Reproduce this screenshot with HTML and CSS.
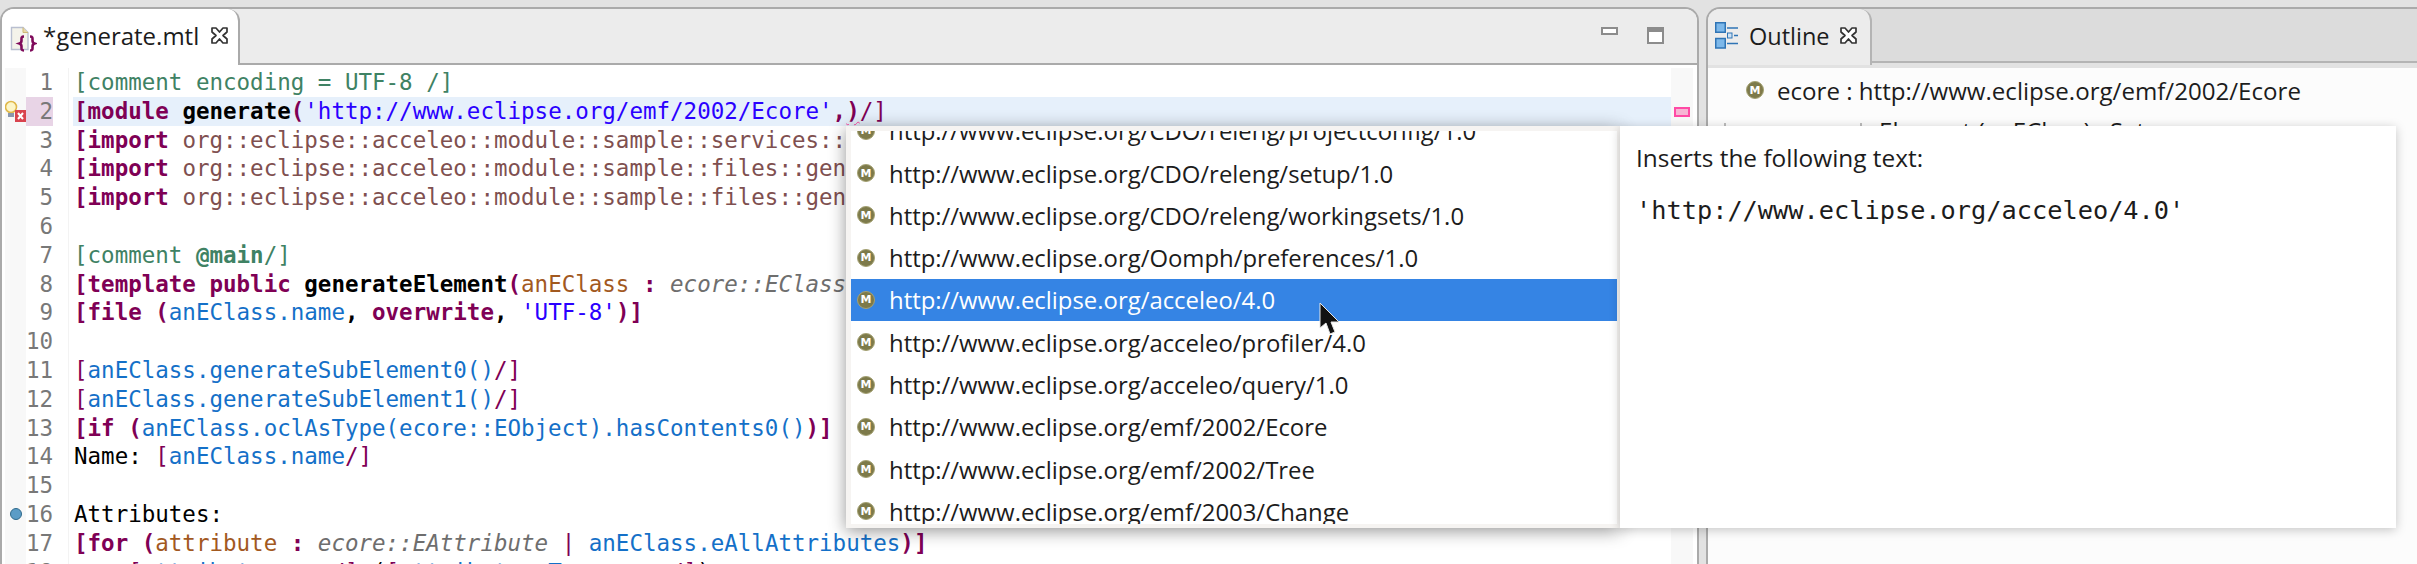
FILE: index.html
```html
<!DOCTYPE html>
<html lang="en">
<head>
<meta charset="utf-8">
<title>generate.mtl</title>
<link rel="stylesheet" href="styles.css">
</head>
<body>
<div class="app">
  <section class="editor">
    <header class="tabbar">
      <div class="tab">
        <svg class="file-icon" width="27" height="27" viewBox="0 0 27 27"><path d="M1.5 1.5H13l5 5v17H1.5z" fill="#f4f3ea" stroke="#b9bfd0" stroke-width="1.4"/><path d="M13 1.5v5h5" fill="#e8d9a8" stroke="#cdb878"/><path d="M14 10.5c-3 0-2.500 1.500-2.500 4 0 2-.5 2.500-2 3 1.500.5 2 1 2 3 0 2.500-.5 4 2.500 4M20 10.500c3 0 2.500 1.500 2.500 4 0 2 .5 2.500 2 3-1.500.5-2 1-2 3 0 2.500.5 4-2.500 4" fill="none" stroke="#7f0a5a" stroke-width="2.600"/></svg>
        <span class="tab-title">*generate.mtl</span>
        <svg class="close" width="19" height="19" viewBox="0 0 19 19"><path d="M2 2h4l3.500 4L13 2h4v4l-4 3.500 4 3.500v4h-4l-3.500-4L6 17H2v-4l4-3.500L2 6z" fill="#fff" stroke="#333" stroke-width="1.700" stroke-linejoin="round"/></svg>
      </div>
      <div class="tab-tools">
        <span class="btn-min"></span>
        <span class="btn-max"></span>
      </div>
    </header>
    <div class="code-area">
      <div class="line"><span class="ann"></span><span class="num">1</span><span class="sep"></span><code class="code c">[comment encoding = UTF-8 /]</code><span class="ruler"></span></div>
      <div class="line"><span class="ann"><svg width="21" height="23" viewBox="0 0 21 23"><circle cx="6" cy="7" r="5.500" fill="#fdf6c8" stroke="#e0b84a" stroke-width="1.600"/><rect x="3" y="13" width="6" height="4" fill="#8a97ad"/><rect x="10" y="10" width="11" height="12" fill="#d9434e"/><path d="M13 13l5 6M18 13l-5 6" stroke="#fff" stroke-width="2"/></svg></span><span class="num num-err">2</span><span class="sep"></span><code class="code hl"><span class="k">[module </span><b>generate</b><span class="k">(</span><span class="s">'http://www.eclipse.org/emf/2002/Ecore'</span><span class="k">,</span><span class="k squig">)</span><span class="k n">/]</span></code><span class="ruler"><i class="err-mark"></i></span></div>
      <div class="line"><span class="ann"></span><span class="num">3</span><span class="sep"></span><code class="code"><span class="k">[import </span><span class="imp">org::eclipse::acceleo::module::sample::services::</span></code><span class="ruler"></span></div>
      <div class="line"><span class="ann"></span><span class="num">4</span><span class="sep"></span><code class="code"><span class="k">[import </span><span class="imp">org::eclipse::acceleo::module::sample::files::gen</span></code><span class="ruler"></span></div>
      <div class="line"><span class="ann"></span><span class="num">5</span><span class="sep"></span><code class="code"><span class="k">[import </span><span class="imp">org::eclipse::acceleo::module::sample::files::gen</span></code><span class="ruler"></span></div>
      <div class="line"><span class="ann"></span><span class="num">6</span><span class="sep"></span><code class="code"></code><span class="ruler"></span></div>
      <div class="line"><span class="ann"></span><span class="num">7</span><span class="sep"></span><code class="code c">[comment <b>@main</b>/]</code><span class="ruler"></span></div>
      <div class="line"><span class="ann"></span><span class="num">8</span><span class="sep"></span><code class="code"><span class="k">[template public </span><b>generateElement</b><span class="k">(</span><span class="a">anEClass</span><span class="k"> : </span><span class="t">ecore::EClass</span></code><span class="ruler"></span></div>
      <div class="line"><span class="ann"></span><span class="num">9</span><span class="sep"></span><code class="code"><span class="k">[file (</span><span class="v">anEClass.name</span><b>,</b><span class="k"> overwrite</span><b>,</b><span class="s"> 'UTF-8'</span><span class="k">)]</span></code><span class="ruler"></span></div>
      <div class="line"><span class="ann"></span><span class="num">10</span><span class="sep"></span><code class="code"></code><span class="ruler"></span></div>
      <div class="line"><span class="ann"></span><span class="num">11</span><span class="sep"></span><code class="code"><span class="k n">[</span><span class="v">anEClass.generateSubElement0()</span><span class="k n">/]</span></code><span class="ruler"></span></div>
      <div class="line"><span class="ann"></span><span class="num">12</span><span class="sep"></span><code class="code"><span class="k n">[</span><span class="v">anEClass.generateSubElement1()</span><span class="k n">/]</span></code><span class="ruler"></span></div>
      <div class="line"><span class="ann"></span><span class="num">13</span><span class="sep"></span><code class="code"><span class="k">[if (</span><span class="v">anEClass.oclAsType(ecore::EObject).hasContents0()</span><span class="k">)]</span></code><span class="ruler"></span></div>
      <div class="line"><span class="ann"></span><span class="num">14</span><span class="sep"></span><code class="code">Name: <span class="k n">[</span><span class="v">anEClass.name</span><span class="k n">/]</span></code><span class="ruler"></span></div>
      <div class="line"><span class="ann"></span><span class="num">15</span><span class="sep"></span><code class="code"></code><span class="ruler"></span></div>
      <div class="line"><span class="ann"><i class="task-dot"></i></span><span class="num">16</span><span class="sep"></span><code class="code">Attributes:</code><span class="ruler"></span></div>
      <div class="line"><span class="ann"></span><span class="num">17</span><span class="sep"></span><code class="code"><span class="k">[for (</span><span class="a">attribute</span><span class="k"> : </span><span class="t">ecore::EAttribute</span><span class="k n"> | </span><span class="v">anEClass.eAllAttributes</span><span class="k">)]</span></code><span class="ruler"></span></div>
      <div class="line"><span class="ann"></span><span class="num">18</span><span class="sep"></span><code class="code">    <span class="k n">[</span><span class="v">attribute.name</span><span class="k n">/]</span> (<span class="k n">[</span><span class="v">attribute.eType.name</span><span class="k n">/]</span>)</code><span class="ruler"></span></div>
    </div>
  </section>

  <section class="outline">
    <header class="outline-bar">
      <div class="outline-tab">
        <svg width="23" height="27" viewBox="0 0 23 27"><rect x=".75" y=".75" width="9.500" height="9.500" fill="#7db8ea" stroke="#2f74b5" stroke-width="1.500"/><rect x=".75" y="16.500" width="9.500" height="9.500" fill="#7db8ea" stroke="#2f74b5" stroke-width="1.500"/><path d="M12 6h11M12 21.500h11M19 13.500h4" stroke="#2f74b5" stroke-width="1.500"/><rect x="12.500" y="11" width="4.500" height="5" fill="#cfe3f5" stroke="#2f74b5"/></svg>
        <span class="outline-title">Outline</span>
        <svg class="close" width="19" height="19" viewBox="0 0 19 19"><path d="M2 2h4l3.500 4L13 2h4v4l-4 3.500 4 3.500v4h-4l-3.500-4L6 17H2v-4l4-3.500L2 6z" fill="#fff" stroke="#333" stroke-width="1.700" stroke-linejoin="round"/></svg>
      </div>
    </header>
    <div class="outline-body">
      <div class="outline-row"><span class="m-icon">M</span><span>ecore : http://www.eclipse.org/emf/2002/Ecore</span></div>
      <div class="outline-row outline-sub"><i class="tick tick-a"></i><i class="tick tick-b"></i><span>Element (anEClass) : Set</span></div>
    </div>
  </section>

  <div class="popup-list">
    <ul class="list">
      <li><span class="m-icon">M</span>http://www.eclipse.org/CDO/releng/projectconfig/1.0</li>
      <li><span class="m-icon">M</span>http://www.eclipse.org/CDO/releng/setup/1.0</li>
      <li><span class="m-icon">M</span>http://www.eclipse.org/CDO/releng/workingsets/1.0</li>
      <li><span class="m-icon">M</span>http://www.eclipse.org/Oomph/preferences/1.0</li>
      <li class="sel"><span class="m-icon">M</span>http://www.eclipse.org/acceleo/4.0</li>
      <li><span class="m-icon">M</span>http://www.eclipse.org/acceleo/profiler/4.0</li>
      <li><span class="m-icon">M</span>http://www.eclipse.org/acceleo/query/1.0</li>
      <li><span class="m-icon">M</span>http://www.eclipse.org/emf/2002/Ecore</li>
      <li><span class="m-icon">M</span>http://www.eclipse.org/emf/2002/Tree</li>
      <li><span class="m-icon">M</span>http://www.eclipse.org/emf/2003/Change</li>
    </ul>
  </div>
  <aside class="popup-info">
    <p class="info-text">Inserts the following text:</p>
    <p class="info-code">'http://www.eclipse.org/acceleo/4.0'</p>
  </aside>
  <svg class="cursor" width="22" height="34" viewBox="0 0 22 34"><path d="M1 1v25l6-5 4 11 5-2-4-10h8z" fill="#111" stroke="#e8e8e8" stroke-width="1"/></svg>
</div>
</body>
</html>
```
FILE: styles.css
```css
* { box-sizing: border-box; }
html, body { margin: 0; padding: 0; }
body { width: 2417px; height: 564px; overflow: hidden; background: #e2e2e2; }
.app {
  position: relative;
  display: flex;
  height: 564px;
  padding-top: 7px;
  overflow: hidden;
  background: #e2e2e2;
  font-family: "Open Sans", "Noto Sans", sans-serif;
  color: #1c1c1c;
}
.editor {
  flex: none;
  width: 1699px;
  border: 2px solid #aaaaaa;
  border-bottom: 0;
  border-radius: 14px 14px 0 0;
  background: #fff;
  overflow: hidden;
}
.tabbar {
  display: flex;
  justify-content: space-between;
  height: 56px;
  background: #ececec;
  border-bottom: 2px solid #aaaaaa;
}
.tab {
  display: flex;
  align-items: center;
  width: 238px;
  height: 56px;
  padding: 0 0 4px 8px;
  background: #fff;
  border-right: 2px solid #aaaaaa;
  border-top-right-radius: 12px;
}
.file-icon { flex: none; margin-top: 8px; }
.tab-title { margin-left: 6px; font-size: 24px; white-space: nowrap; }
.tab .close { flex: none; margin-left: 11px; }
.tab-tools { display: flex; align-items: flex-start; gap: 29px; padding: 18px 33px 0 0; }
.btn-min { width: 17px; height: 8px; border: 2px solid #8c8c8c; background: #fff; }
.btn-max { width: 17px; height: 17px; border: 2px solid #8c8c8c; border-top-width: 5px; background: #fff; }
.code-area { padding: 3px 4px 0 3px; }
.line { display: flex; height: 28.8px; }
.ann {
  flex: none;
  display: flex;
  align-items: center;
  width: 21px;
  background: #f8f8f8;
}
.num {
  flex: none;
  width: 27px;
  font: 22.5px/28.8px "DejaVu Sans Mono", monospace;
  color: #787878;
  text-align: right;
}
.num-err { background: #e8d4e6; }
.sep { flex: none; width: 16px; margin-right: 4px; border-right: 1px solid #f3f3f3; }
.code {
  flex: 1;
  min-width: 0;
  padding-left: 1px;
  font: 22.5px/28.8px "DejaVu Sans Mono", monospace;
  color: #000;
  white-space: pre;
  overflow: hidden;
}
.hl { background: #e6f0fb; }
.ruler { flex: none; width: 22px; background: #f8f8f8; }
.err-mark {
  display: block;
  width: 16px;
  height: 10px;
  margin: 10px 0 0 3px;
  border: 2px solid #ff4aa5;
  background: #f7b5d4;
}
.task-dot {
  display: block;
  width: 12px;
  height: 12px;
  margin-left: 5px;
  border-radius: 50%;
  border: 1px solid #2f6a8c;
  background: #5b9cc6;
}
.k { color: #7f0055; font-weight: bold; }
.n { font-weight: normal; }
.c { color: #3f8264; }
.s { color: #2a00ff; }
.imp { color: #7f5050; }
.v { color: #1470c8; }
.t { color: #6e6e6e; font-style: italic; }
.a { color: #a2591f; }
.squig { text-decoration: underline wavy #ff4aa5 1px; text-underline-offset: 2px; }
.outline {
  flex: none;
  width: 711px;
  margin-left: 7px;
  border-top: 2px solid #aaaaaa;
  border-left: 2px solid #aaaaaa;
  border-top-left-radius: 14px;
  background: #fcfcfc;
  overflow: hidden;
}
.outline-bar {
  height: 59px;
  background: #dcdcdc;
  position: relative;
  border-bottom: 5px solid #e2e2e2;
  box-shadow: inset 0 -2px 0 #b4b4b4;
}
.outline-tab {
  display: flex;
  align-items: center;
  width: 164px;
  height: 56px;
  padding: 0 0 4px 7px;
  background: #ececec;
  border-right: 2px solid #b4b4b4;
  border-top-right-radius: 12px;
}
.outline-title { margin: 2px 0 0 11px; font-size: 23.5px; }
.outline-tab .close { margin-left: 9px; }
.outline-body { padding-top: 7px; }
.outline-row {
  display: flex;
  align-items: center;
  height: 30px;
  margin-bottom: 10px;
  padding-left: 38px;
  font-size: 24.1px;
  white-space: nowrap;
}
.outline-row .m-icon { margin-right: 13px; }
.outline-sub { padding-left: 16px; }
.tick { flex: none; width: 2px; height: 14px; background: #bdbdbd; }
.tick-b { margin: 0 17px 0 134px; }
.m-icon {
  flex: none;
  display: inline-flex;
  align-items: center;
  justify-content: center;
  width: 18px;
  height: 18px;
  border-radius: 50%;
  background: #7d7a4a;
  border: 1px solid #a5a274;
  color: #fff;
  font: bold 11px/1 "DejaVu Sans", sans-serif;
}
.popup-list {
  position: absolute;
  left: 846px;
  top: 126px;
  width: 774px;
  height: 402px;
  padding: 5px 3px 4px 5px;
  background: #f6f4f2;
  box-shadow: 0 3px 16px rgba(0, 0, 0, .42);
}
.list {
  list-style: none;
  margin: 0;
  padding: 0;
  height: 393px;
  overflow: hidden;
  background: #fff;
}
.list li {
  display: flex;
  align-items: center;
  height: 42.3px;
  padding-left: 6px;
  font-size: 23.9px;
  white-space: nowrap;
}
.list li:first-child { margin-top: -21.4px; }
.list .m-icon { margin-right: 14px; }
.list .sel { background: #3584e4; color: #fff; }
.popup-info {
  position: absolute;
  left: 1620px;
  top: 126px;
  width: 776px;
  height: 402px;
  padding: 16px 16px;
  background: #fff;
  box-shadow: 0 2px 10px rgba(0, 0, 0, .22);
}
.info-text { margin: 0; font-size: 24.4px; line-height: 32px; }
.info-code { margin: 21px 0 0; font: 25.3px/32px "DejaVu Sans Mono", monospace; }
.cursor { position: absolute; left: 1319px; top: 302px; }
```
